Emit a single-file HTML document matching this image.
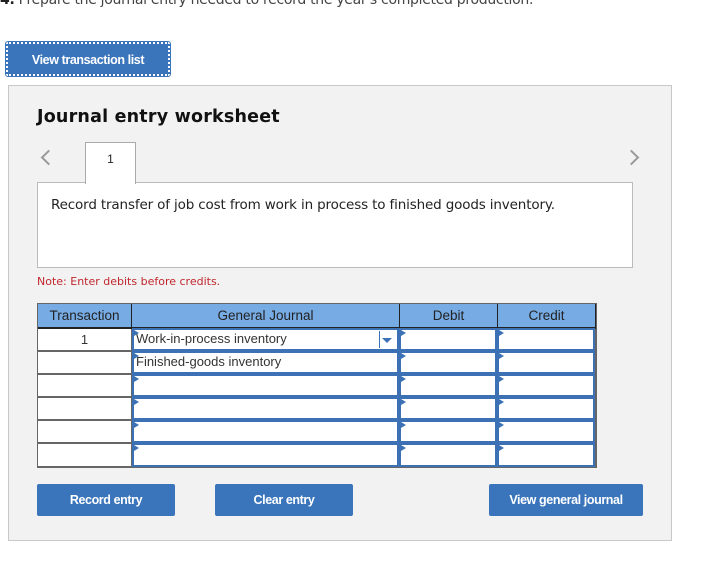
<!DOCTYPE html>
<html><head><style>
body{margin:0;width:720px;height:580px;background:#fff;font-family:"Liberation Sans",Arial,sans-serif;position:relative;overflow:hidden}
.a{position:absolute}
.btn{position:absolute;background:#3a75bb;color:#fff;font-weight:bold;font-size:12.5px;letter-spacing:-0.4px;text-align:center;border-radius:2px}
.cell{position:absolute;box-sizing:border-box;background:#fff}
.in{position:absolute;box-sizing:border-box;border:2px solid #3c72b5;background:#fff;font-size:13px;color:#333;padding-left:2px;line-height:18px}
.in:before{content:"";position:absolute;left:0;top:0;border-left:5px solid #3c72b5;border-top:3px solid transparent;border-bottom:3px solid transparent}
.h{position:absolute;box-sizing:border-box;background:#77abe4;font-size:13.5px;color:#222;text-align:center;line-height:24px;border-right:1px solid #222;border-bottom:2px solid #222}
.chev{position:absolute;width:9px;height:9px;border-left:2px solid #999;border-bottom:2px solid #999}
</style></head><body>
<div class="a" style="left:0;top:-8px;font-size:14px;color:#444;font-family:'DejaVu Sans',sans-serif;letter-spacing:-0.3px"><b style="color:#222">4.</b> Prepare the journal entry needed to record the year's completed production.</div>
<div class="btn" style="left:6px;top:42px;width:164px;height:34px;line-height:33px;box-sizing:border-box;border:2px dotted #fff;outline:1px solid #3a75bb">View transaction list</div>
<div class="a" style="left:8px;top:85px;width:664px;height:456px;background:#f2f2f2;border:1px solid #c8c8c8;box-sizing:border-box"></div>
<div class="a" style="left:37px;top:107px;font-size:17.5px;font-weight:bold;color:#111;font-family:'DejaVu Sans',sans-serif;letter-spacing:0.2px">Journal entry worksheet</div>
<div class="chev" style="left:43px;top:152px;transform:rotate(45deg)"></div>
<div class="chev" style="left:626px;top:152px;transform:rotate(-135deg)"></div>
<div class="a" style="left:37px;top:182px;width:596px;height:86px;background:#fff;border:1px solid #bbb;box-sizing:border-box"></div>
<div class="a" style="left:85px;top:142px;width:51px;height:42px;background:#fff;border:1px solid #aaa;border-bottom:none;box-sizing:border-box;text-align:center;font-size:12px;line-height:32px;color:#222">1</div>
<div class="a" style="left:51px;top:197px;font-size:13.5px;color:#222;font-family:'DejaVu Sans',sans-serif;letter-spacing:-0.15px">Record transfer of job cost from work in process to finished goods inventory.</div>
<div class="a" style="left:37px;top:275px;font-size:11px;color:#c0272d;font-family:'DejaVu Sans',sans-serif">Note: Enter debits before credits.</div>
<div class="a" style="left:37px;top:303px;width:560px;height:165px;background:#666"></div>
<div class="h" style="left:38px;top:304px;width:94px;height:25px">Transaction</div>
<div class="h" style="left:132px;top:304px;width:268px;height:25px">General Journal</div>
<div class="h" style="left:400px;top:304px;width:98px;height:25px">Debit</div>
<div class="h" style="left:498px;top:304px;width:98px;height:25px;border-right:1px solid #222">Credit</div>

<div class="cell" style="left:38px;top:329px;width:93px;height:21px;text-align:center;font-size:13px;line-height:21px;color:#333">1</div>
<div class="cell" style="left:38px;top:352px;width:93px;height:21px"></div>
<div class="cell" style="left:38px;top:375px;width:93px;height:21px"></div>
<div class="cell" style="left:38px;top:398px;width:93px;height:21px"></div>
<div class="cell" style="left:38px;top:421px;width:93px;height:21px"></div>
<div class="cell" style="left:38px;top:444px;width:93px;height:22px"></div>

<div class="in" style="left:132px;top:328px;width:267px;height:23px">Work-in-process inventory<span class="a" style="right:17px;top:1px;height:17px;border-left:1px solid #3c72b5"></span><span class="a" style="right:5px;top:8px;border-top:5px solid #3c72b5;border-left:5px solid transparent;border-right:5px solid transparent"></span></div>
<div class="in" style="left:132px;top:351px;width:267px;height:23px">Finished-goods inventory</div>
<div class="in" style="left:132px;top:374px;width:267px;height:23px"></div>
<div class="in" style="left:132px;top:397px;width:267px;height:23px"></div>
<div class="in" style="left:132px;top:420px;width:267px;height:23px"></div>
<div class="in" style="left:132px;top:443px;width:267px;height:24px"></div>

<div class="in" style="left:399px;top:328px;width:98px;height:23px"></div>
<div class="in" style="left:399px;top:351px;width:98px;height:23px"></div>
<div class="in" style="left:399px;top:374px;width:98px;height:23px"></div>
<div class="in" style="left:399px;top:397px;width:98px;height:23px"></div>
<div class="in" style="left:399px;top:420px;width:98px;height:23px"></div>
<div class="in" style="left:399px;top:443px;width:98px;height:24px"></div>

<div class="in" style="left:497px;top:328px;width:98px;height:23px"></div>
<div class="in" style="left:497px;top:351px;width:98px;height:23px"></div>
<div class="in" style="left:497px;top:374px;width:98px;height:23px"></div>
<div class="in" style="left:497px;top:397px;width:98px;height:23px"></div>
<div class="in" style="left:497px;top:420px;width:98px;height:23px"></div>
<div class="in" style="left:497px;top:443px;width:98px;height:24px"></div>

<div class="btn" style="left:37px;top:484px;width:138px;height:32px;line-height:32px">Record entry</div>
<div class="btn" style="left:215px;top:484px;width:138px;height:32px;line-height:32px">Clear entry</div>
<div class="btn" style="left:489px;top:484px;width:154px;height:32px;line-height:32px">View general journal</div>
</body></html>
